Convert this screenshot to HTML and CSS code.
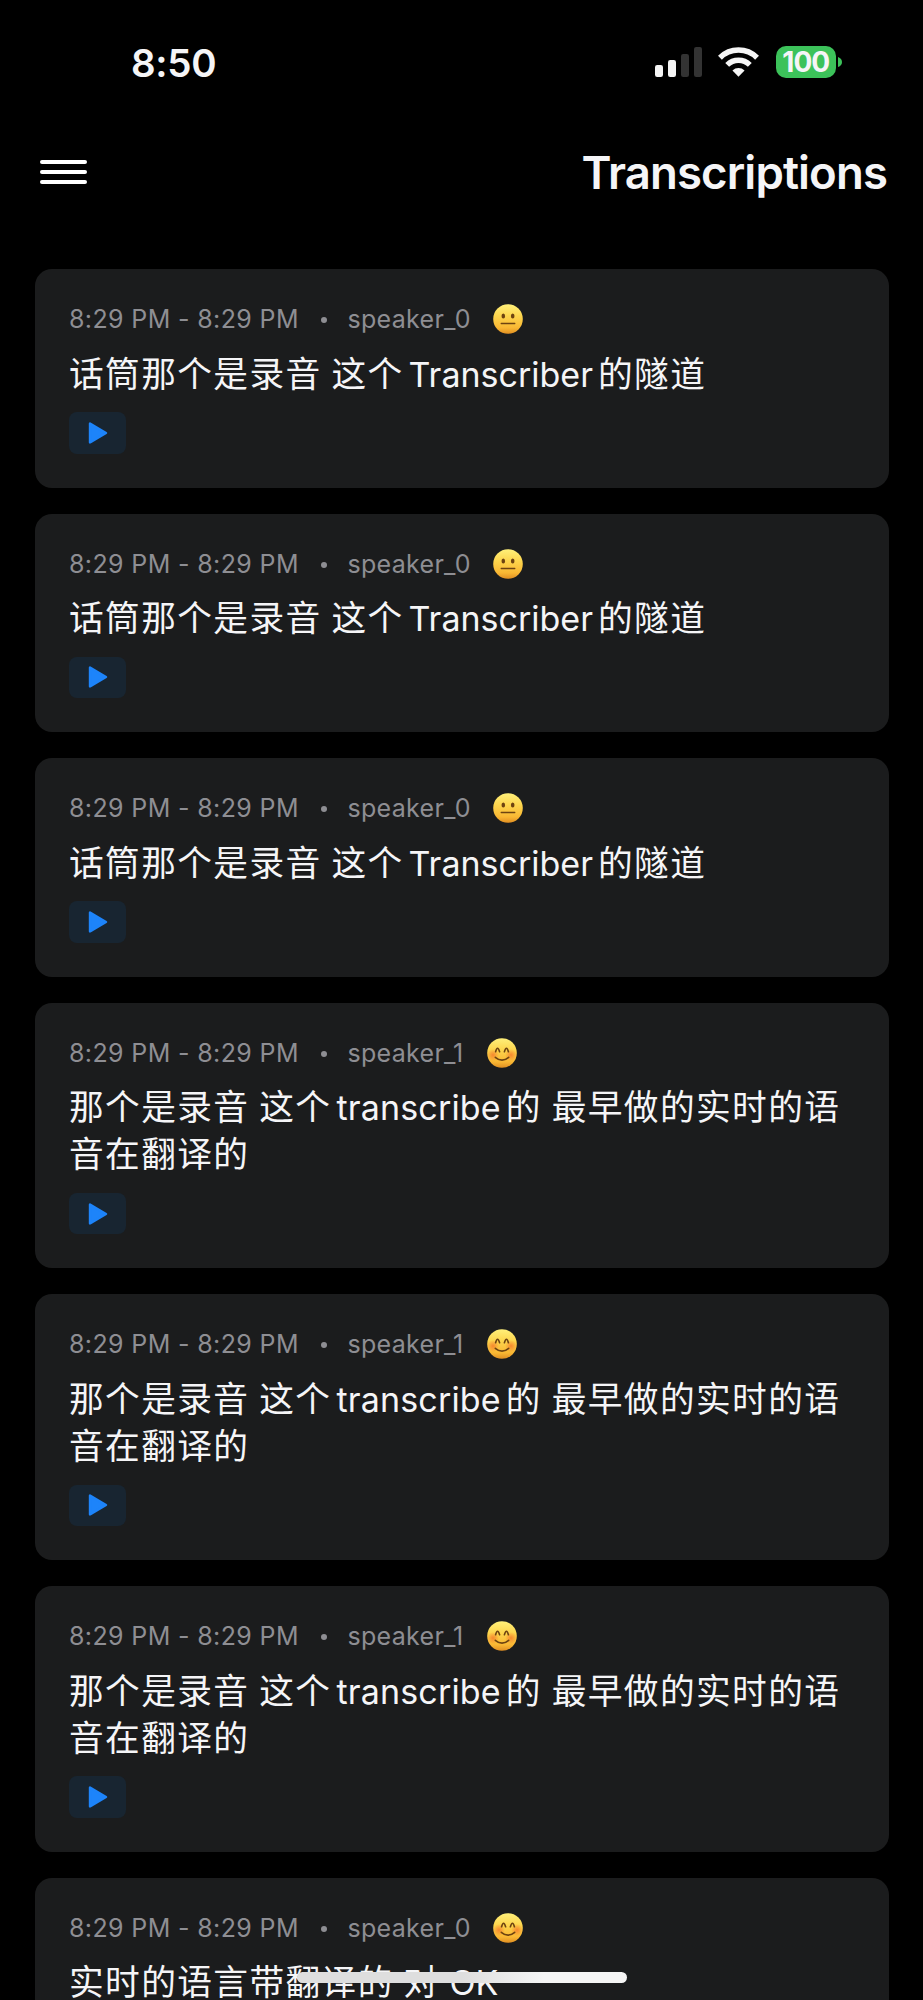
FILE: index.html
```
<!DOCTYPE html>
<html lang="zh">
<head>
<meta charset="utf-8">
<title>Transcriptions</title>
<link rel="stylesheet" href="styles.css">
</head>
<body>
<svg class="defs" width="0" height="0" aria-hidden="true">
  <defs>
    <linearGradient id="skin" x1="0" y1="0" x2="0" y2="1"><stop offset="0" stop-color="#fff07a"/><stop offset=".4" stop-color="#fdd54d"/><stop offset=".8" stop-color="#f9b733"/><stop offset="1" stop-color="#e08e22"/></linearGradient>
    <radialGradient id="blush"><stop offset="0" stop-color="#f5782a" stop-opacity=".8"/><stop offset="1" stop-color="#f5782a" stop-opacity="0"/></radialGradient>
    <symbol id="neutral" viewBox="0 0 30 30"><circle cx="15" cy="15" r="14.8" fill="url(#skin)"/><ellipse cx="10.3" cy="12" rx="1.8" ry="2.6" fill="#6d4311"/><ellipse cx="19.7" cy="12" rx="1.8" ry="2.6" fill="#6d4311"/><path d="M8.200 19.500h13.600" stroke="#6d4311" stroke-width="1.300" stroke-linecap="round"/></symbol>
    <symbol id="smile" viewBox="0 0 30 30"><circle cx="15" cy="15" r="14.8" fill="url(#skin)"/><circle cx="6" cy="17" r="6" fill="url(#blush)"/><circle cx="24" cy="17" r="6" fill="url(#blush)"/><path d="M8.600 13.800Q10.500 6.600 12.600 13.800M17.400 13.800Q19.500 6.600 21.400 13.800M8.300 19.300Q15 25 21.700 19.300" fill="none" stroke="#6d4311" stroke-width="1.600" stroke-linecap="round"/></symbol>
    <symbol id="play" viewBox="0 0 20 22"><path d="M2 1.600v18.800L18 11Z" fill="#1d84fa" stroke="#1d84fa" stroke-width="2.400" stroke-linejoin="round"/></symbol>
  </defs>
</svg>
<div class="screen">
  <div class="status">
    <span class="clock">8:50</span>
    <div class="indicators">
      <svg class="signal" viewBox="0 0 47 30"><rect x="0" y="18" width="8" height="12" rx="2.200" fill="#f5f5f5"/><rect x="13" y="13" width="8" height="17" rx="2.200" fill="#f5f5f5"/><rect x="26" y="7" width="8" height="23" rx="2.200" fill="#333"/><rect x="39" y="0" width="8" height="30" rx="2.200" fill="#333"/></svg>
      <svg class="wifi" viewBox="0 0 42 30"><g fill="none" stroke="#f5f5f5" stroke-width="5.600"><path d="M2 10.600A27 27 0 0 1 40 10.600"/><path d="M9.400 18A16.500 16.500 0 0 1 32.600 18"/></g><path d="M21 30l-6.200-6.300a9 9 0 0 1 12.400 0Z" fill="#f5f5f5"/></svg>
      <div class="battery"><span class="level">100</span><svg class="tip" viewBox="0 0 4 10"><path d="M0 0Q4 1.500 4 5T0 10Z" fill="#3cc25a"/></svg></div>
    </div>
  </div>
  <header class="bar">
    <div class="menu"><i></i><i></i><i></i></div>
    <h1 class="title">Transcriptions</h1>
  </header>
  <main class="list">
    <article class="card">
      <div class="meta"><span class="time">8:29 PM - 8:29 PM</span><i class="dot"></i><span class="who">speaker_0</span><svg class="mood"><use href="#neutral"/></svg></div>
      <p class="text">话筒那个是录音 这个<span class="latin cap">Transcriber</span>的隧道</p>
      <div class="play"><svg><use href="#play"/></svg></div>
    </article>
    <article class="card">
      <div class="meta"><span class="time">8:29 PM - 8:29 PM</span><i class="dot"></i><span class="who">speaker_0</span><svg class="mood"><use href="#neutral"/></svg></div>
      <p class="text">话筒那个是录音 这个<span class="latin cap">Transcriber</span>的隧道</p>
      <div class="play"><svg><use href="#play"/></svg></div>
    </article>
    <article class="card">
      <div class="meta"><span class="time">8:29 PM - 8:29 PM</span><i class="dot"></i><span class="who">speaker_0</span><svg class="mood"><use href="#neutral"/></svg></div>
      <p class="text">话筒那个是录音 这个<span class="latin cap">Transcriber</span>的隧道</p>
      <div class="play"><svg><use href="#play"/></svg></div>
    </article>
    <article class="card">
      <div class="meta"><span class="time">8:29 PM - 8:29 PM</span><i class="dot"></i><span class="who one">speaker_1</span><svg class="mood"><use href="#smile"/></svg></div>
      <p class="text">那个是录音 这个<span class="latin">transcribe</span>的 最早做的实时的语<br>音在翻译的</p>
      <div class="play"><svg><use href="#play"/></svg></div>
    </article>
    <article class="card">
      <div class="meta"><span class="time">8:29 PM - 8:29 PM</span><i class="dot"></i><span class="who one">speaker_1</span><svg class="mood"><use href="#smile"/></svg></div>
      <p class="text">那个是录音 这个<span class="latin">transcribe</span>的 最早做的实时的语<br>音在翻译的</p>
      <div class="play"><svg><use href="#play"/></svg></div>
    </article>
    <article class="card">
      <div class="meta"><span class="time">8:29 PM - 8:29 PM</span><i class="dot"></i><span class="who one">speaker_1</span><svg class="mood"><use href="#smile"/></svg></div>
      <p class="text">那个是录音 这个<span class="latin">transcribe</span>的 最早做的实时的语<br>音在翻译的</p>
      <div class="play"><svg><use href="#play"/></svg></div>
    </article>
    <article class="card">
      <div class="meta"><span class="time">8:29 PM - 8:29 PM</span><i class="dot"></i><span class="who">speaker_0</span><svg class="mood"><use href="#smile"/></svg></div>
      <p class="text">实时的语言带翻译的 对 <span class="ok">OK</span></p>
      <div class="play"><svg><use href="#play"/></svg></div>
    </article>
  </main>
  <div class="home"></div>
</div>
</body>
</html>
```
FILE: styles.css
```
* { box-sizing: border-box; }
html, body { margin: 0; background: #000; }
.defs { position: absolute; }
.screen {
  position: relative;
  width: 923px;
  height: 2000px;
  overflow: hidden;
  background: #000;
  color: #f5f5f7;
  font-family: Inter, "Noto Sans CJK SC", sans-serif;
}
.status {
  display: flex;
  justify-content: space-between;
  align-items: center;
  height: 124px;
  padding: 0 81px 0 131px;
}
.clock { margin-top: 1px; font-size: 38.500px; font-weight: 600; letter-spacing: -0.300px; }
.indicators { display: flex; align-items: center; }
.signal { width: 47px; height: 30px; margin-right: 16px; }
.wifi { width: 41px; height: 30px; margin-right: 16.500px; }
.battery { display: flex; align-items: center; gap: 2px; }
.level {
  width: 60.500px;
  height: 32px;
  border-radius: 10px;
  background: #3cc25a;
  font-size: 28px;
  font-weight: 700;
  line-height: 32px;
  text-align: center;
  letter-spacing: -1px;
}
.tip { width: 4px; height: 10px; }
.bar {
  display: flex;
  justify-content: space-between;
  align-items: center;
  height: 95px;
  padding: 1px 36px 0 40px;
}
.menu { display: flex; flex-direction: column; gap: 6px; width: 47px; }
.menu i { height: 4px; border-radius: 2px; background: #fff; }
.title { margin: 0; font-size: 45.500px; font-weight: 600; letter-spacing: -0.880px; }
.list {
  display: flex;
  flex-direction: column;
  gap: 26px;
  padding: 50px 34.500px 0 35px;
}
.card {
  flex: none;
  padding: 34.500px 34px 34px;
  border-radius: 17px;
  background: #1b1c1d;
}
.meta { display: flex; align-items: center; height: 31px; font-size: 25px; color: #8e8e93; white-space: nowrap; }
.time { width: 252px; letter-spacing: 0.370px; }
.dot { width: 6px; height: 6px; margin-top: 2px; border-radius: 50%; background: #8e8e93; }
.who { margin-left: 20.500px; letter-spacing: 0.300px; }
.mood { width: 30px; height: 30px; margin-left: 22px; }
.one + .mood { margin-left: 23.500px; }
.text {
  margin: 14px 0 16.500px;
  font-family: "Noto Sans CJK SC", sans-serif;
  font-size: 34.700px;
  line-height: 47.100px;
  letter-spacing: 1.400px;
  word-spacing: 0.600px;
  white-space: nowrap;
}
.latin, .ok { font-family: Inter, sans-serif; font-size: 34px; line-height: 1; letter-spacing: 0.170px; }
.latin { margin: 0 5px; }
.cap { letter-spacing: 0; }
.play {
  display: flex;
  align-items: center;
  justify-content: center;
  width: 57px;
  height: 41.500px;
  border-radius: 8px;
  background: #182531;
}
.play svg { width: 20px; height: 22px; margin-left: 1px; }
.home {
  position: absolute;
  left: 297px;
  top: 1972px;
  width: 330px;
  height: 11px;
  border-radius: 6px;
  background: linear-gradient(90deg, #dedede 50%, #f5f5f5 75%);
}
```
